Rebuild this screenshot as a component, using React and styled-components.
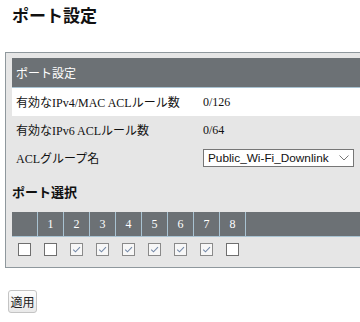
import styled, { createGlobalStyle } from 'styled-components'

const GlobalStyle = createGlobalStyle`
body {
  margin: 0;
  background: #fff;
  font-family: "Liberation Serif", "Noto Sans CJK JP", serif;
  color: #111;
}
`

const Page = styled.div`
width: 360px;
overflow: hidden;
`
const Title = styled.h1`
margin: 0;
padding: 3px 0 0 12px;
height: 52px;
box-sizing: border-box;
font-family: "Noto Sans CJK JP", sans-serif;
font-size: 17px;
line-height: 24px;
font-weight: bold;
`
const Panel = styled.div`
margin-left: 5px;
border: 1px solid #8f989d;
border-right: none;
background: #e6e6e6;
padding: 5px 0 5px 6px;
`
const PanelHeader = styled.div`
height: 29px;
background: #6c7175;
border-bottom: 1px solid #a9c3d2;
color: #fff;
font-family: "Noto Sans CJK JP", sans-serif;
font-size: 12px;
line-height: 29px;
padding-left: 4px;
`
const Row = styled.div`
display: flex;
align-items: center;
height: 28px;
background: ${p => (p.white ? '#fff' : 'transparent')};
font-size: 12px;
`
const Label = styled.div`
width: 187px;
padding-left: 4px;
flex-shrink: 0;
`
const Value = styled.div`
flex: 1;
`
const Select = styled.div`
display: flex;
align-items: center;
justify-content: space-between;
width: 141px;
height: 16px;
border: 1px solid #767676;
background: #fff;
font-family: "Liberation Sans", Arial, sans-serif;
font-size: 11.8px;
padding-left: 4px;
padding-right: 4px;
`
const SectionTitle = styled.div`
padding-top: 11px;
height: 40px;
box-sizing: border-box;
font-family: "Noto Sans CJK JP", sans-serif;
font-weight: bold;
font-size: 13px;
line-height: 18px;
`
const PortGrid = styled.div`
display: grid;
grid-template-columns: repeat(9, 26px) 1fr;
`
const HeadCell = styled.div`
height: 24px;
background: #6c7175;
border-right: ${p => (p.last ? 'none' : '1px solid #a9c3d2')};
border-bottom: 1px solid #a9c3d2;
color: #fff;
font-size: 12px;
line-height: 24px;
text-align: center;
`
const BoxCell = styled.div`
height: 25px;
display: flex;
align-items: center;
justify-content: center;
padding-right: 1px;
`
const Box = styled.span`
width: 11px;
height: 11px;
border: 1px solid ${p => (p.checked ? '#8a8a8a' : '#6f6f6f')};
background: ${p => (p.checked ? '#f7f7f7' : '#fff')};
display: flex;
align-items: center;
justify-content: center;
`
const ApplyButton = styled.button`
margin: 22px 0 0 8px;
width: 29px;
height: 23px;
padding: 0;
border: 1px solid #c4c4c4;
border-radius: 3px;
background: linear-gradient(#fdfdfd, #e9e9e9);
font-family: "Noto Sans CJK JP", sans-serif;
font-size: 12px;
color: #222;
`

const ports = [
  { n: '', checked: false },
  { n: '1', checked: false },
  { n: '2', checked: true },
  { n: '3', checked: true },
  { n: '4', checked: true },
  { n: '5', checked: true },
  { n: '6', checked: true },
  { n: '7', checked: true },
  { n: '8', checked: false },
]

function CheckBox({ checked }) {
  return (
    <Box checked={checked}>
      {checked && (
        <svg width="9" height="9" viewBox="0 0 9 9">
          <path d="M1.2 4.6 L3.5 6.8 L8 2.2" fill="none" stroke="#7489a8" strokeWidth="1.1" />
        </svg>
      )}
    </Box>
  )
}

export default function App() {
  return (
    <Page>
      <GlobalStyle />
      <Title>ポート設定</Title>
      <Panel>
        <PanelHeader>ポート設定</PanelHeader>
        <Row white>
          <Label>有効なIPv4/MAC ACLルール数</Label>
          <Value>0/126</Value>
        </Row>
        <Row>
          <Label>有効なIPv6 ACLルール数</Label>
          <Value>0/64</Value>
        </Row>
        <Row>
          <Label>ACLグループ名</Label>
          <Value>
            <Select>
              <span>Public_Wi-Fi_Downlink</span>
              <svg width="10" height="6" viewBox="0 0 10 6">
                <path d="M0.5 0.5 L5 5 L9.5 0.5" fill="none" stroke="#777" strokeWidth="1" />
              </svg>
            </Select>
          </Value>
        </Row>
        <SectionTitle>ポート選択</SectionTitle>
        <PortGrid>
          {ports.map((p, i) => (
            <HeadCell key={'h' + i}>{p.n}</HeadCell>
          ))}
          <HeadCell last />
          {ports.map((p, i) => (
            <BoxCell key={'c' + i}>
              <CheckBox checked={p.checked} />
            </BoxCell>
          ))}
          <BoxCell />
        </PortGrid>
      </Panel>
      <ApplyButton>適用</ApplyButton>
    </Page>
  )
}
